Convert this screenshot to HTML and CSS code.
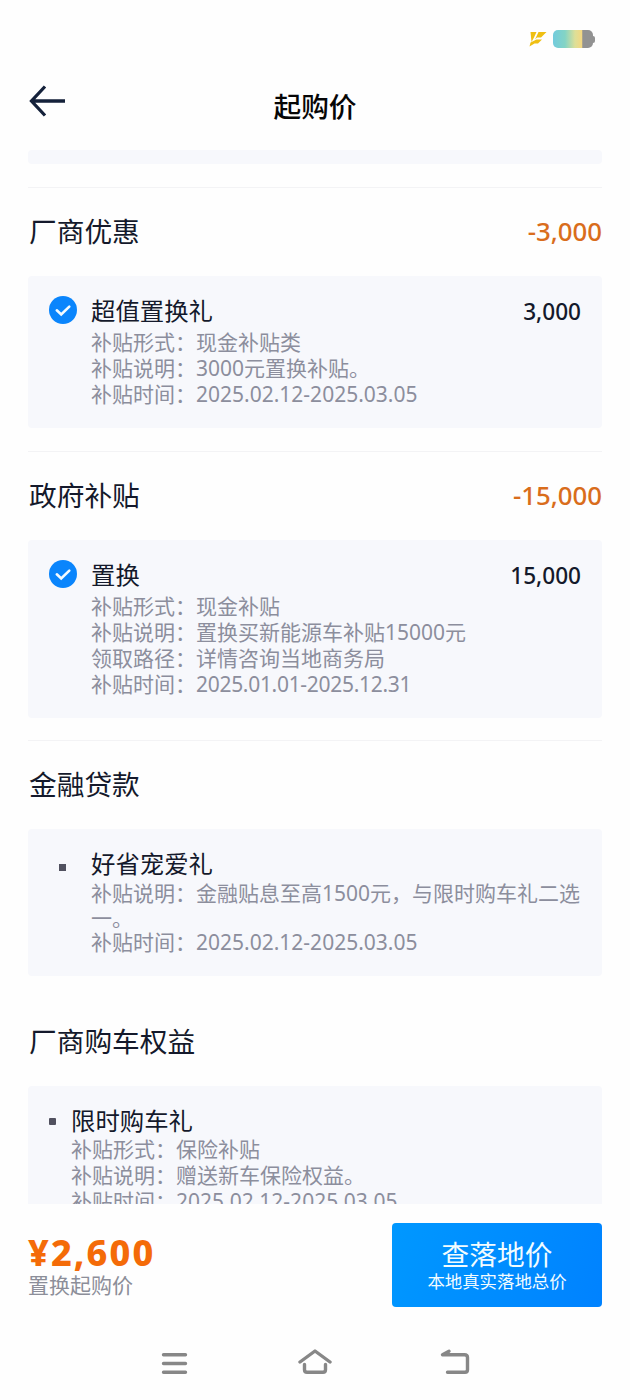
FILE: index.html
```html
<!DOCTYPE html>
<html lang="zh-CN">
<head>
<meta charset="utf-8">
<title>起购价</title>
<link rel="stylesheet" href="styles.css">
</head>
<body>
<div class="screen">
  <div class="status">
    <svg class="bolt" width="20" height="18" viewBox="0 0 20 18"><path d="M2.500 2H8.500L6 7.500 3.500 12ZM10.500 2H18.500L13 7.500H9L7 9.500ZM8.500 9.500H14L10 13.500H6.500L1.500 16.500 2.500 12.500Z" fill="#efbf12"/></svg>
    <div class="battery"></div><div class="battery-tip"></div>
  </div>
  <header class="header">
    <svg class="back" width="38" height="34" viewBox="0 0 38 34"><path d="M17 2.500 3.500 17 17 31.500M3.500 17H37" fill="none" stroke="#14213a" stroke-width="3.300"/></svg>
    <h1 class="title">起购价</h1>
  </header>
  <main class="content">
    <div class="card card-tail"></div>
    <section class="section ruled">
      <div class="head"><h2>厂商优惠</h2><span class="discount">-3,000</span></div>
      <div class="card card-offer">
        <svg class="check" width="28" height="28" viewBox="0 0 28 28"><circle cx="14" cy="14" r="14" fill="#0a85fc"/><path d="M7.800 14.300 12.200 18.500 20.300 10.600" fill="none" stroke="#f4fbff" stroke-width="2.600" stroke-linecap="round"/></svg>
        <div class="body">
          <div class="name"><span>超值置换礼</span><span class="amount">3,000</span></div>
          <p>补贴形式：现金补贴类</p>
          <p>补贴说明：3000元置换补贴。</p>
          <p>补贴时间：2025.02.12-2025.03.05</p>
        </div>
      </div>
    </section>
    <section class="section ruled">
      <div class="head"><h2>政府补贴</h2><span class="discount">-15,000</span></div>
      <div class="card card-subsidy">
        <svg class="check" width="28" height="28" viewBox="0 0 28 28"><circle cx="14" cy="14" r="14" fill="#0a85fc"/><path d="M7.800 14.300 12.200 18.500 20.300 10.600" fill="none" stroke="#f4fbff" stroke-width="2.600" stroke-linecap="round"/></svg>
        <div class="body">
          <div class="name"><span>置换</span><span class="amount">15,000</span></div>
          <p>补贴形式：现金补贴</p>
          <p>补贴说明：置换买新能源车补贴15000元</p>
          <p>领取路径：详情咨询当地商务局</p>
          <p>补贴时间：<span class="narrow">2025.01.01-2025.12.31</span></p>
        </div>
      </div>
    </section>
    <section class="section ruled">
      <div class="head"><h2>金融贷款</h2></div>
      <div class="card card-loan">
        <div class="marker"></div>
        <div class="body">
          <div class="name"><span>好省宠爱礼</span></div>
          <p>补贴说明：金融贴息至高1500元，与限时购车礼二选<br>一。</p>
          <p>补贴时间：2025.02.12-2025.03.05</p>
        </div>
      </div>
    </section>
    <section class="section">
      <div class="head"><h2>厂商购车权益</h2></div>
      <div class="card card-rights">
        <div class="marker"></div>
        <div class="body">
          <div class="name"><span>限时购车礼</span></div>
          <p>补贴形式：保险补贴</p>
          <p>补贴说明：赠送新车保险权益。</p>
          <p>补贴时间：2025.02.12-2025.03.05</p>
        </div>
      </div>
    </section>
  </main>
  <footer class="footer">
    <div class="total">
      <div class="price">¥2,600</div>
      <div class="caption">置换起购价</div>
    </div>
    <div class="cta">
      <div class="cta-main">查落地价</div>
      <div class="cta-sub">本地真实落地总价</div>
    </div>
  </footer>
  <nav class="nav">
    <svg width="36" height="30" viewBox="0 0 36 30"><path d="M6.500 5.700H28.500M6.500 14.500H28.500M6.500 23.300H28.500"/></svg>
    <svg width="36" height="30" viewBox="0 0 36 30"><path d="M3 13 18 2 33 13M7.500 15.500V20.800Q7.500 23.300 10 23.300H26Q28.500 23.300 28.500 20.800V15.500"/></svg>
    <svg width="36" height="30" viewBox="0 0 36 30"><path d="M12 2.300 5.500 5.700H27.500Q30.500 5.700 30.500 8.500V20.800Q30.500 23.300 28 23.300H10.500"/></svg>
  </nav>
</div>
</body>
</html>
```
FILE: styles.css
```css
* { box-sizing: border-box; }
body, h1, h2, p { margin: 0; }
body {
  background: #fefefe;
  color: #14192b;
  font-family: "Noto Sans", "Noto Sans CJK SC", sans-serif;
}
.screen {
  width: 630px;
  height: 1400px;
  display: flex;
  flex-direction: column;
  overflow: hidden;
}
.status {
  height: 70px;
  padding: 8px 35px 0 0;
  display: flex;
  align-items: center;
  justify-content: flex-end;
}
.bolt { margin-right: 5px; }
.battery {
  width: 40px;
  height: 18px;
  border-radius: 5px;
  background: linear-gradient(90deg, #72cbdd 0, #83d4c5 30%, #dddf98 55%, #f5d780 73%, #929292 74%);
}
.battery-tip { width: 2px; height: 7px; background: #929292; border-radius: 0 2px 2px 0; }
.header {
  height: 80px;
  padding: 0 28px;
  display: grid;
  grid-template-columns: 38px 1fr 38px;
}
.back { margin-top: 14px; }
.title {
  font-size: 27.700px;
  font-weight: 500;
  line-height: 40px;
  margin-top: 16px;
  text-align: center;
  color: #060606;
}
.content { height: 1054px; padding: 0 28px; overflow: hidden; }
.card {
  display: flex;
  background: #f7f8fc;
  border-radius: 4px;
  padding: 20px 21px 0;
}
.card-tail { height: 14px; padding: 0; margin-bottom: 23px; }
.section { margin-bottom: 23px; }
.ruled { border-top: 1px solid #f3f3f5; }
.head {
  height: 88px;
  padding-bottom: 2px;
  display: flex;
  align-items: center;
  justify-content: space-between;
}
h2 { font-size: 27.700px; font-weight: 400; line-height: 40px; padding-left: 1px; }
.discount { font-size: 25.800px; font-weight: 500; color: #d96d1c; line-height: 36px; }
.card-offer { height: 152px; }
.card-subsidy { height: 178px; }
.card-loan { height: 147px; }
.card-rights { height: 180px; }
.section:has(.card-subsidy) { margin-bottom: 22px; }
.section:has(.card-loan) { margin-bottom: 22px; }
.check { flex: none; margin-right: 14px; }
.body { flex: 1; }
.name {
  display: flex;
  justify-content: space-between;
  font-size: 24.400px;
  line-height: 30px;
  height: 32.500px;
}
.amount { font-size: 22.600px; line-height: 32px; font-weight: 500; }
p {
  font-size: 21px;
  line-height: 26.300px;
  color: #8c8e9d;
  white-space: nowrap;
}
.narrow { letter-spacing: -0.300px; }
.card-loan p { line-height: 24.500px; }
.marker {
  flex: none;
  width: 7px;
  height: 7px;
  background: #51515f;
}
.card-loan .marker { margin: 15px 25px 0 10px; }
.card-rights .marker { margin: 12px 15px 0 0; border-radius: 1px; }
.card-loan .name { height: 32px; }
.card-rights .name { height: 29.500px; }
.footer {
  height: 116px;
  padding: 19px 28px 0;
  display: flex;
  justify-content: space-between;
}
.price {
  font-size: 36px;
  font-weight: 800;
  line-height: 42px;
  margin-top: 9px;
  letter-spacing: 2.100px;
  color: #f46b08;
}
.caption { font-size: 21px; line-height: 24px; margin-top: -1px; color: #8c8e99; }
.cta {
  width: 210px;
  height: 84px;
  padding-top: 13px;
  border-radius: 4px;
  background: linear-gradient(110deg, #0098ff, #0082ff);
  color: #f2fcff;
  text-align: center;
}
.cta-main { font-size: 27.700px; line-height: 36px; }
.cta-sub { font-size: 17.400px; line-height: 18px; }
.nav {
  height: 80px;
  padding: 29px 157px 0;
  display: flex;
  justify-content: space-between;
}
.nav svg {
  fill: none;
  stroke: #878787;
  stroke-width: 3.400;
  stroke-linecap: round;
  stroke-linejoin: round;
}
```
